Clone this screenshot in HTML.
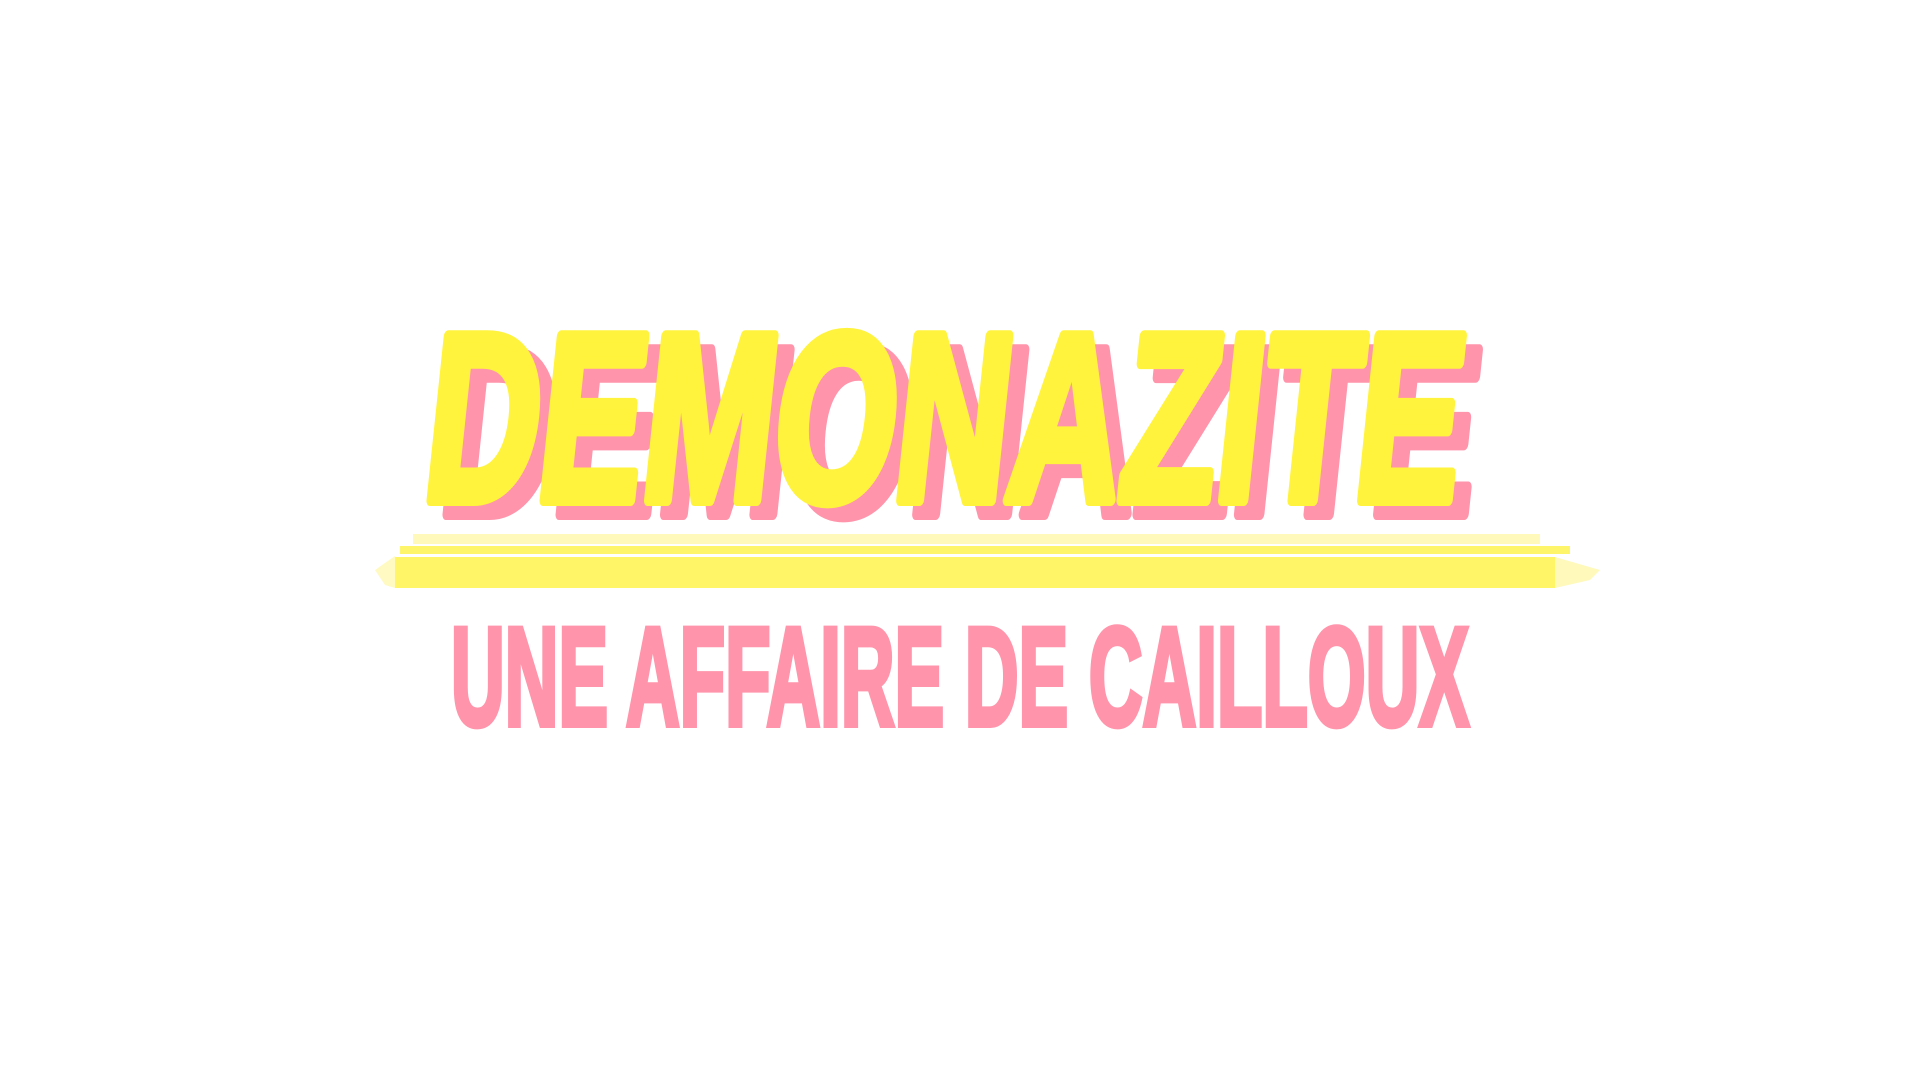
<!DOCTYPE html>
<html><head><meta charset="utf-8"><style>
html,body{margin:0;padding:0;background:#fff;width:1921px;height:1080px;overflow:hidden}
svg{display:block}
</style></head><body>
<svg width="1921" height="1080" viewBox="0 0 1921 1080" xmlns="http://www.w3.org/2000/svg">
<rect width="1921" height="1080" fill="#fff"/>
<rect x="413" y="534" width="1127" height="10" fill="#fff7a0" opacity="0.7"/>
<rect x="400" y="546" width="1170" height="8" fill="#fff56a"/>
<rect x="395" y="557" width="1160" height="31" fill="#fff566"/>
<polygon points="375,570 395,556 395,588 385,585" fill="#fff8a8" opacity="0.7"/>
<polygon points="1555,557 1600,570 1590,580 1555,588" fill="#fff7a0" opacity="0.7"/>
<g transform="translate(436,514) skewX(-6)">
<text x="0" y="0" font-family="'Liberation Sans',sans-serif" font-weight="bold" font-size="238" textLength="1035" lengthAdjust="spacingAndGlyphs" fill="#ff94ab" stroke="#ff94ab" stroke-width="12" stroke-linejoin="round">DEMONAZITE</text>
</g>
<g transform="translate(420,500) skewX(-6)">
<text x="0" y="0" font-family="'Liberation Sans',sans-serif" font-weight="bold" font-size="238" textLength="1035" lengthAdjust="spacingAndGlyphs" fill="#fff33d" stroke="#fff33d" stroke-width="12" stroke-linejoin="round">DEMONAZITE</text>
</g>
<text x="451" y="725" font-family="'Liberation Sans',sans-serif" font-weight="bold" font-size="140" textLength="1018" lengthAdjust="spacingAndGlyphs" fill="#ff94ab" stroke="#ff94ab" stroke-width="6" stroke-linejoin="miter">UNE AFFAIRE DE CAILLOUX</text>
</svg>
</body></html>
